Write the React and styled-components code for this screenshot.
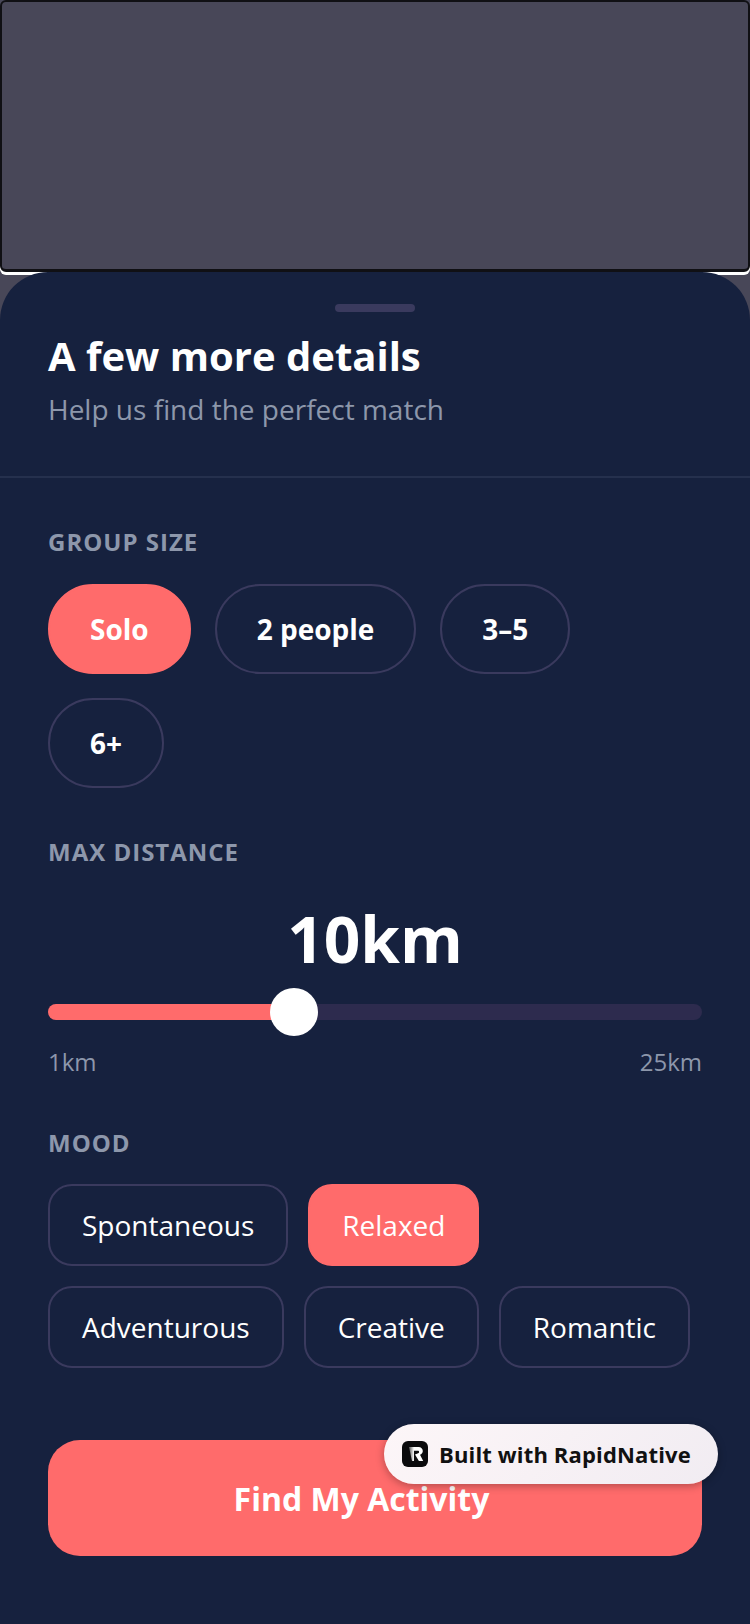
import styled, { createGlobalStyle } from "styled-components";

const GlobalStyle = createGlobalStyle`
  html, body {
    margin: 0;
    padding: 0;
    background: #484758;
  }

  * {
    box-sizing: border-box;
  }
`;

const Screen = styled.div`
  width: 750px;
  height: 1624px;
  overflow: hidden;
  position: relative;
  font-family: "Open Sans", "Noto Sans", sans-serif;
  background: #484758;
`;

const Hero = styled.div`
  height: 272px;
  background: #484758;
  border: 2px solid #101014;
  border-width: 2px 2px 3px;
  border-radius: 6px;
  box-shadow: 0 3px 0 #fff;
`;

const Sheet = styled.div`
  height: 1352px;
  background: #16213e;
  border-radius: 48px 48px 0 0;
`;

const Header = styled.div`
  padding: 32px 48px 0;
  height: 206px;
  border-bottom: 2px solid #25304d;
`;

const Handle = styled.div`
  width: 80px;
  height: 8px;
  margin: 0 auto 17px;
  background: #3a3a5e;
  border-radius: 4px;
`;

const Title = styled.h1`
  margin: 0;
  font-size: 40px;
  line-height: 54px;
  font-weight: 700;
  color: #fff;
`;

const Subtitle = styled.p`
  margin: 6px 0 0;
  font-size: 28px;
  line-height: 40px;
  color: #8d97ab;
`;

const Body = styled.div`
  padding: 0 48px;
`;

const SectionLabel = styled.div`
  margin-top: ${(p) => p.$top}px;
  font-size: 24px;
  line-height: 30px;
  font-weight: 700;
  letter-spacing: 1px;
  color: #8d97ab;
`;

const ChipRow = styled.div`
  display: flex;
  flex-wrap: wrap;
  gap: ${(p) => p.$gap}px;
  margin-top: ${(p) => p.$top}px;
`;

const SizeChip = styled.div`
  height: 90px;
  padding: 0 40px;
  display: flex;
  align-items: center;
  border-radius: 45px;
  font-size: 28px;
  font-weight: 700;
  color: #fff;
  background: ${(p) => (p.$active ? "#ff6b6b" : "transparent")};
  border: 2px solid ${(p) => (p.$active ? "#ff6b6b" : "#3a3a5e")};
`;

const MoodChip = styled.div`
  height: 82px;
  padding: 0 32px;
  display: flex;
  align-items: center;
  border-radius: 24px;
  font-size: 28px;
  color: #fff;
  background: ${(p) => (p.$active ? "#ff6b6b" : "transparent")};
  border: 2px solid ${(p) => (p.$active ? "#ff6b6b" : "#3a3a5e")};
`;

const DistanceValue = styled.div`
  margin-top: 28px;
  text-align: center;
  font-size: 64px;
  line-height: 88px;
  font-weight: 700;
  color: #fff;
`;

const Track = styled.div`
  position: relative;
  height: 16px;
  margin-top: 21px;
  background: #2d2b4e;
  border-radius: 8px;
`;

const TrackFill = styled.div`
  height: 100%;
  background: #ff6b6b;
  border-radius: 8px 0 0 8px;
`;

const Thumb = styled.div`
  position: absolute;
  top: -16px;
  width: 48px;
  height: 48px;
  background: #fff;
  border-radius: 50%;
`;

const RangeLabels = styled.div`
  display: flex;
  justify-content: space-between;
  margin-top: 26px;
  font-size: 24px;
  line-height: 32px;
  color: #8d97ab;
`;

const SubmitButton = styled.div`
  height: 116px;
  margin-top: 72px;
  display: flex;
  align-items: center;
  justify-content: center;
  padding-right: 27px;
  background: #ff6b6b;
  border-radius: 32px;
  font-size: 32px;
  font-weight: 700;
  color: #fff;
`;

const Badge = styled.div`
  position: absolute;
  left: 384px;
  top: 1424px;
  width: 334px;
  height: 60px;
  display: flex;
  align-items: center;
  gap: 11px;
  padding-left: 18px;
  background: linear-gradient(135deg, #fdf6f8, #f1ecf2);
  border-radius: 30px;
  box-shadow: 0 2px 8px rgba(0, 0, 0, 0.3);
  font-size: 22px;
  font-weight: 700;
  letter-spacing: 0.15px;
  color: #111;
`;

const BadgeLogo = styled.svg`
  width: 26px;
  height: 26px;
  flex: none;
`;

const sizes = ["Solo", "2 people", "3–5", "6+"];
const moods = ["Spontaneous", "Relaxed", "Adventurous", "Creative", "Romantic"];

const App = () => {
  return (
    <Screen>
      <GlobalStyle />
      <Hero />

      <Sheet>
        <Header>
          <Handle />
          <Title>A few more details</Title>
          <Subtitle>Help us find the perfect match</Subtitle>
        </Header>

        <Body>
          <SectionLabel $top={49}>GROUP SIZE</SectionLabel>
          <ChipRow $gap={24} $top={27}>
            {sizes.map((size) => (
              <SizeChip key={size} $active={size === "Solo"}>
                {size}
              </SizeChip>
            ))}
          </ChipRow>

          <SectionLabel $top={49}>MAX DISTANCE</SectionLabel>
          <DistanceValue>10km</DistanceValue>
          <Track>
            <TrackFill style={{ width: `${(246 / 654) * 100}%` }} />
            <Thumb style={{ left: 222 }} />
          </Track>
          <RangeLabels>
            <span>1km</span>
            <span>25km</span>
          </RangeLabels>

          <SectionLabel $top={50}>MOOD</SectionLabel>
          <ChipRow $gap={20} $top={26}>
            {moods.map((mood) => (
              <MoodChip key={mood} $active={mood === "Relaxed"}>
                {mood}
              </MoodChip>
            ))}
          </ChipRow>

          <SubmitButton>Find My Activity</SubmitButton>
        </Body>
      </Sheet>

      <Badge>
        <BadgeLogo viewBox="0 0 26 26">
          <defs>
            <linearGradient id="badgeStem" x1="0" x2="1" y1="0" y2="0">
              <stop offset="0" stopColor="#555" />
              <stop offset="1" stopColor="#fff" />
            </linearGradient>
          </defs>
          <rect width="26" height="26" rx="6" fill="#0b0b0d" />
          <path d="M7 6h5v14H10z" fill="url(#badgeStem)" />
          <path
            d="M12 6h4.5c2.6 0 4.3 1.7 4.3 4 0 1.9-1.1 3.2-2.8 3.7l3.2 6.3h-4.3l-3.9-6.6 3.2-1.2c.7-.3.9-.8.9-1.2 0-.7-.5-1.2-1.3-1.2H12z"
            fill="#fff"
          />
        </BadgeLogo>
        Built with RapidNative
      </Badge>
    </Screen>
  );
};

export default App;
